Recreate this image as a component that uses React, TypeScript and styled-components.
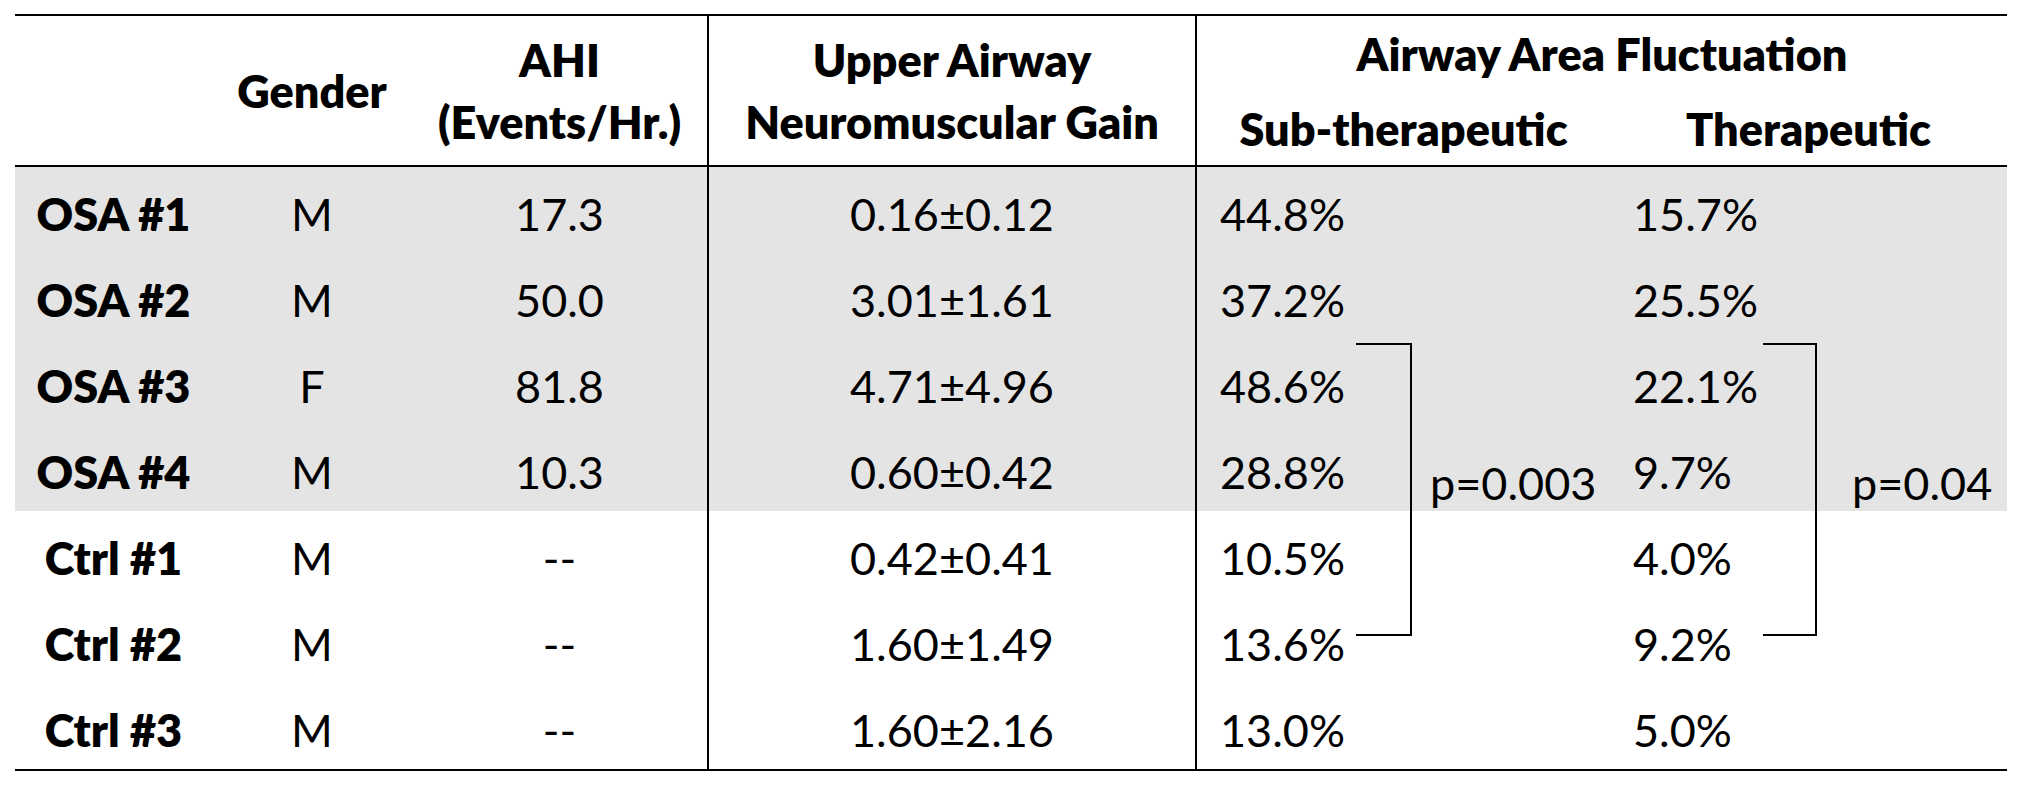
import React from "react";
import styled, { createGlobalStyle } from "styled-components";

const GlobalStyle = createGlobalStyle`
  html, body { margin: 0; padding: 0; background: #ffffff; }
  body {
    font-family: Lato, "Open Sans", "Liberation Sans", sans-serif;
    color: #000000;
  }
`;

const COLS = "197px 200px 295px 488px 415px 397px";

const Page = styled.div`
  width: 2025px;
  height: 789px;
  box-sizing: border-box;
  padding: 14px 0 0 15px;
  overflow: hidden;
`;

const Table = styled.div`
  width: 1992px;
  border-top: 2px solid #000;
  border-bottom: 2px solid #000;
`;

const Header = styled.div`
  display: grid;
  grid-template-columns: ${COLS};
  grid-template-rows: 76px 73px;
  border-bottom: 2px solid #000;
`;

const HeadCell = styled.div<{ $row: string; $col: string; $divider?: boolean }>`
  grid-row: ${(p) => p.$row};
  grid-column: ${(p) => p.$col};
  border-left: ${(p) => (p.$divider ? "2px solid #000" : "none")};
  display: flex;
  flex-direction: column;
  align-items: center;
  justify-content: center;
  font-size: 45px;
  font-weight: 800;
  line-height: 62px;
  text-align: center;
  white-space: nowrap;
`;

const Body = styled.div`
  position: relative;
`;

const Row = styled.div<{ $shaded: boolean }>`
  display: grid;
  grid-template-columns: ${COLS};
  height: 86px;
  background: ${(p) => (p.$shaded ? "#e4e4e4" : "transparent")};
`;

const Cell = styled.div<{ $align: "center" | "left"; $divider?: boolean; $bold?: boolean }>`
  display: flex;
  align-items: center;
  justify-content: ${(p) => (p.$align === "center" ? "center" : "flex-start")};
  box-sizing: border-box;
  padding-top: 7px;
  padding-left: ${(p) => (p.$align === "left" ? "23px" : "0")};
  border-left: ${(p) => (p.$divider ? "2px solid #000" : "none")};
  font-size: 45px;
  font-weight: ${(p) => (p.$bold ? 800 : 400)};
  line-height: 62px;
  white-space: nowrap;
`;

const Bracket = styled.div<{ $left: number; $width: number }>`
  position: absolute;
  top: 176px;
  left: ${(p) => p.$left}px;
  width: ${(p) => p.$width}px;
  height: 289px;
  border: 2px solid #000;
  border-left: none;
`;

const PValue = styled.div<{ $left: number }>`
  position: absolute;
  top: 285px;
  left: ${(p) => p.$left}px;
  font-size: 45px;
  line-height: 62px;
  white-space: nowrap;
`;

type Subject = {
  id: string;
  gender: string;
  ahi: string;
  gain: string;
  sub: string;
  ther: string;
  osa: boolean;
};

const subjects: Subject[] = [
  { id: "OSA #1", gender: "M", ahi: "17.3", gain: "0.16±0.12", sub: "44.8%", ther: "15.7%", osa: true },
  { id: "OSA #2", gender: "M", ahi: "50.0", gain: "3.01±1.61", sub: "37.2%", ther: "25.5%", osa: true },
  { id: "OSA #3", gender: "F", ahi: "81.8", gain: "4.71±4.96", sub: "48.6%", ther: "22.1%", osa: true },
  { id: "OSA #4", gender: "M", ahi: "10.3", gain: "0.60±0.42", sub: "28.8%", ther: "9.7%", osa: true },
  { id: "Ctrl #1", gender: "M", ahi: "--", gain: "0.42±0.41", sub: "10.5%", ther: "4.0%", osa: false },
  { id: "Ctrl #2", gender: "M", ahi: "--", gain: "1.60±1.49", sub: "13.6%", ther: "9.2%", osa: false },
  { id: "Ctrl #3", gender: "M", ahi: "--", gain: "1.60±2.16", sub: "13.0%", ther: "5.0%", osa: false },
];

export default function App() {
  return (
    <>
      <GlobalStyle />
      <Page>
        <Table>
          <Header>
            <HeadCell $row="1 / 3" $col="1" />
            <HeadCell $row="1 / 3" $col="2">Gender</HeadCell>
            <HeadCell $row="1 / 3" $col="3">
              <span>AHI</span>
              <span>(Events/Hr.)</span>
            </HeadCell>
            <HeadCell $row="1 / 3" $col="4" $divider>
              <span>Upper Airway</span>
              <span>Neuromuscular Gain</span>
            </HeadCell>
            <HeadCell $row="1" $col="5 / 7" $divider>Airway Area Fluctuation</HeadCell>
            <HeadCell $row="2" $col="5" $divider>Sub-therapeutic</HeadCell>
            <HeadCell $row="2" $col="6">Therapeutic</HeadCell>
          </Header>
          <Body>
            {subjects.map((s) => (
              <Row key={s.id} $shaded={s.osa}>
                <Cell $align="center" $bold>{s.id}</Cell>
                <Cell $align="center">{s.gender}</Cell>
                <Cell $align="center">{s.ahi}</Cell>
                <Cell $align="center" $divider>{s.gain}</Cell>
                <Cell $align="left" $divider>{s.sub}</Cell>
                <Cell $align="left">{s.ther}</Cell>
              </Row>
            ))}
            <Bracket $left={1341} $width={54} />
            <PValue $left={1415}>p=0.003</PValue>
            <Bracket $left={1748} $width={52} />
            <PValue $left={1837}>p=0.04</PValue>
          </Body>
        </Table>
      </Page>
    </>
  );
}
